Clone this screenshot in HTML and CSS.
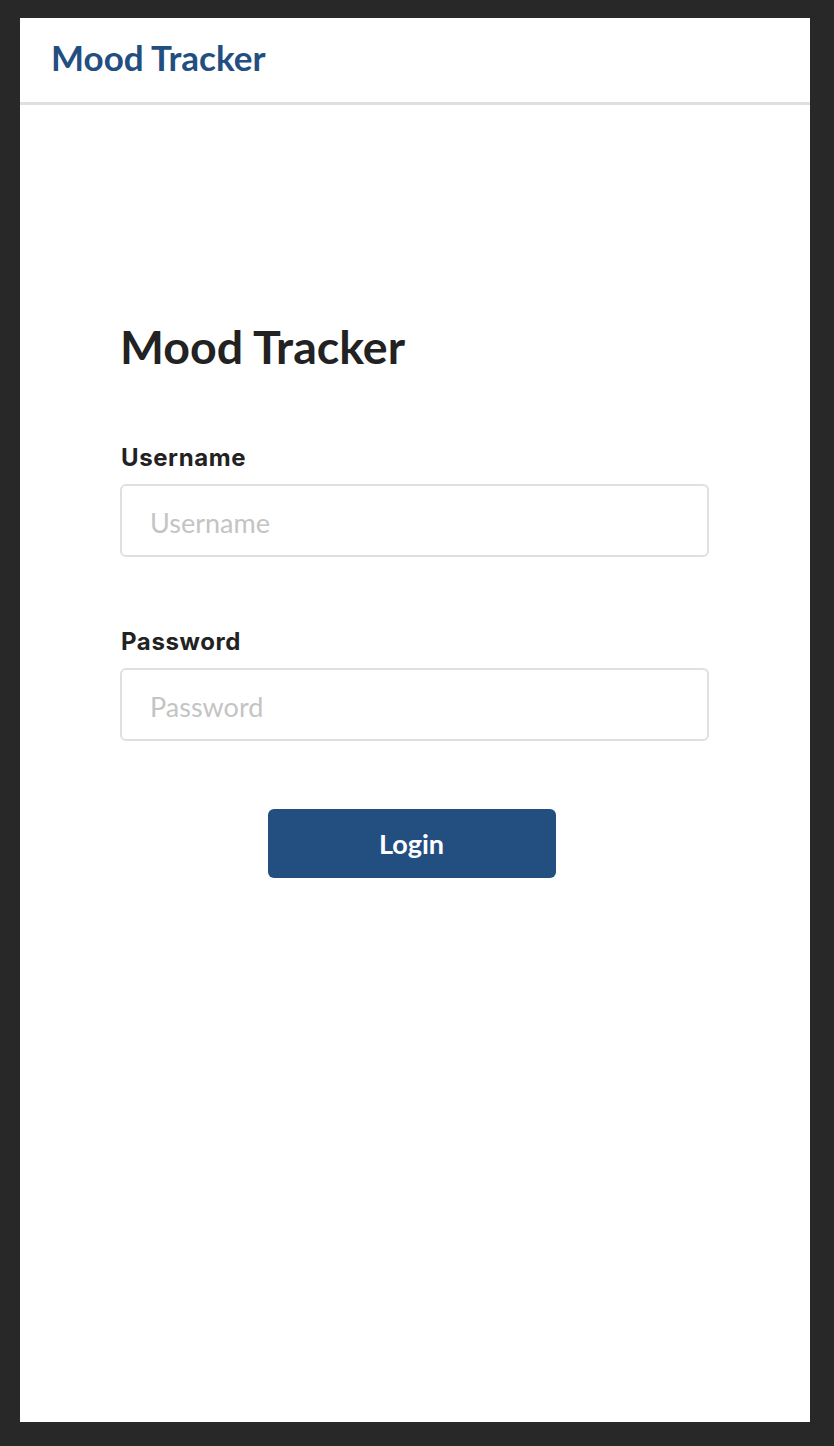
FILE: index.html
```html
<!DOCTYPE html>
<html lang="en">
<head>
<meta charset="utf-8">
<title>Mood Tracker</title>
<link rel="stylesheet" href="styles.css">
</head>
<body>
<div class="frame">
  <header class="topbar">
    <span class="brand">Mood Tracker</span>
  </header>
  <main class="content">
    <form class="login">
      <h1 class="title">Mood Tracker</h1>
      <div class="field">
        <label class="label" for="u">Username</label>
        <input class="input" id="u" type="text" placeholder="Username">
      </div>
      <div class="field">
        <label class="label" for="p">Password</label>
        <input class="input" id="p" type="password" placeholder="Password">
      </div>
      <div class="actions">
        <button class="btn" type="button">Login</button>
      </div>
    </form>
  </main>
</div>
</body>
</html>
```
FILE: styles.css
```css
* { box-sizing: border-box; }
html, body { margin: 0; padding: 0; }
body {
  background: #282828;
  padding: 18px 24px 24px 20px;
  height: 1446px;
  font-family: Lato, "Liberation Sans", sans-serif;
}
.frame {
  background: #ffffff;
  height: 1404px;
  display: flex;
  flex-direction: column;
}
.topbar {
  height: 87px;
  border-bottom: 3px solid #e0e0e0;
  display: flex;
  align-items: center;
  padding-left: 31px;
}
.brand {
  font-family: Lato, sans-serif;
  font-weight: 700;
  font-size: 35px;
  color: #234e80;
  margin-top: -6px;
}
.content {
  display: flex;
  justify-content: center;
  padding-top: 215px;
}
.login {
  width: 589px;
  margin-left: -1px;
}
.title {
  margin: 0 0 72px 0;
  font-family: Lato, sans-serif;
  font-weight: 700;
  font-size: 46.5px;
  line-height: 52px;
  color: #222222;
}
.field {
  display: flex;
  flex-direction: column;
  margin-bottom: 71px;
}
.field + .field { margin-bottom: 68px; }
.label {
  font-family: Inter, "Liberation Sans", Arial, sans-serif;
  font-weight: 700;
  font-size: 24px;
  line-height: 28px;
  letter-spacing: 0.6px;
  color: #222222;
  margin: 0 0 12px 1px;
}
.input {
  height: 73px;
  border: 2px solid #e0e0e0;
  border-radius: 6px;
  padding: 3px 28px 0 28px;
  font-family: Lato, sans-serif;
  font-size: 27px;
  color: #222;
  outline: none;
  background: #fff;
}
.input::placeholder { color: #c4c4c4; }
.actions {
  display: flex;
  justify-content: center;
  padding-right: 6px;
}
.btn {
  width: 288px;
  height: 69px;
  background: #234e80;
  color: #ffffff;
  border: none;
  border-radius: 6px;
  font-family: Lato, sans-serif;
  font-weight: 700;
  font-size: 27px;
}
```
